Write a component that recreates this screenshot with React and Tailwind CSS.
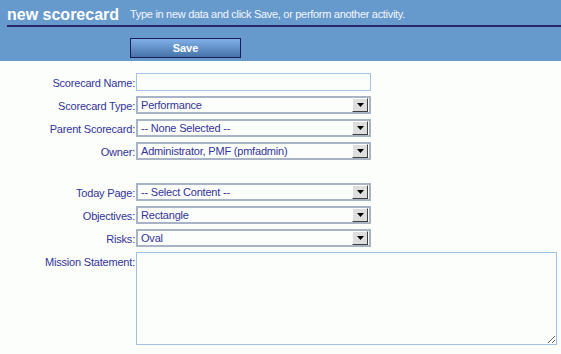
import React from 'react';

const Arrow = () => (
  <div className="ml-auto mr-[1px] flex h-[14px] w-[16px] items-center justify-center border border-t-[#ffffff] border-l-[#ffffff] border-r-[#404040] border-b-[#404040] bg-[#dedede]">
    <svg width="7" height="4" viewBox="0 0 7 4">
      <path d="M0 0h7L3.5 4z" fill="#000" />
    </svg>
  </div>
);

const Row = ({ label, children }) => (
  <div className="flex items-start">
    <div className="h-[18px] w-[136px] shrink-0 pr-[1px] pt-[1px] text-right leading-[18px] tracking-[-0.2px] text-[#333399]">{label}</div>
    {children}
  </div>
);

const Select = ({ value }) => (
  <div className="flex h-[18px] w-[235px] items-center border-2 border-[#a9b3c6] bg-[#fcfefc]">
    <span className="pl-[3px] leading-[14px] tracking-[-0.2px] text-[#333399]">{value}</span>
    <Arrow />
  </div>
);

const App = () => {
  return (
    <div className="h-[354px] w-[561px] overflow-hidden bg-[#fcfefc] font-['Liberation_Sans',Arial,sans-serif] text-[11px]">
      <div className="h-[61px] bg-[#6699cc] pl-[7px]">
        <div className="flex h-[27px] items-end border-b-2 border-[#2a2a6a] pb-[1px]">
          <h1 className="w-[123px] text-[16px] font-bold leading-[18px] text-white">new scorecard</h1>
          <p className="mb-[3px] leading-[14px] tracking-[-0.3px] text-[#f4f7ff]">Type in new data and click Save, or perform another activity.</p>
        </div>
        <button className="ml-[123px] mt-[11px] h-[20px] w-[111px] border border-[#1c1c5a] bg-gradient-to-b from-[#80afe8] to-[#4674a8] text-[11px] font-bold text-white">
          Save
        </button>
      </div>

      <div className="flex flex-col gap-[5px] pt-[12px]">
        <Row label="Scorecard Name:">
          <input className="h-[18px] w-[235px] border border-[#a3c4e4] bg-[#fcfefc] outline-none" />
        </Row>
        <Row label="Scorecard Type:">
          <Select value="Performance" />
        </Row>
        <Row label="Parent Scorecard:">
          <Select value="-- None Selected --" />
        </Row>
        <Row label="Owner:">
          <Select value="Administrator, PMF (pmfadmin)" />
        </Row>
        <div className="h-[13px]" />
        <Row label="Today Page:">
          <Select value="-- Select Content --" />
        </Row>
        <Row label="Objectives:">
          <Select value="Rectangle" />
        </Row>
        <Row label="Risks:">
          <Select value="Oval" />
        </Row>
        <Row label="Mission Statement:">
          <textarea className="h-[93px] w-[421px] border border-[#9cc2e2] bg-[#fcfefc] outline-none" />
        </Row>
      </div>
    </div>
  );
};

export default App;
